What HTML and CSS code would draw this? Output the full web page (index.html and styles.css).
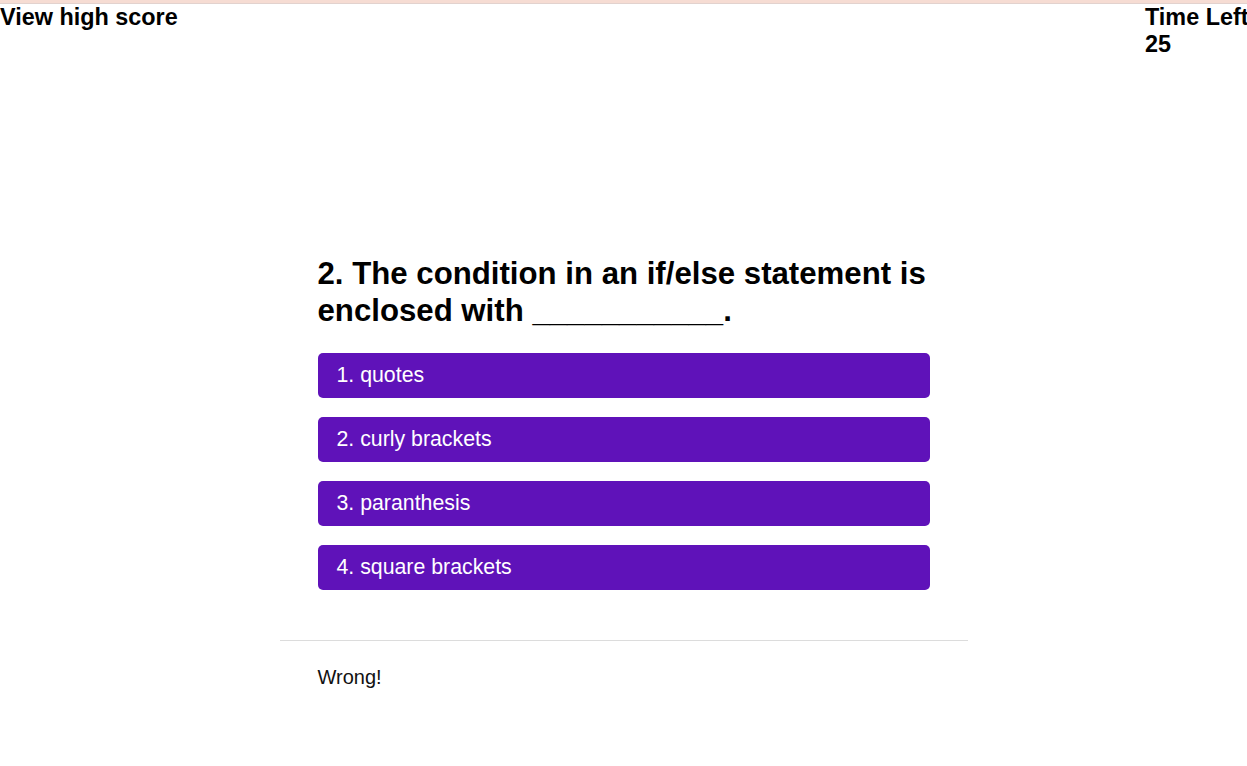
FILE: index.html
```html
<!DOCTYPE html>
<html lang="en">
<head>
<meta charset="utf-8">
<title>Code Quiz</title>
<link rel="stylesheet" href="styles.css">
</head>
<body>
<div class="topstrip"></div>
<header class="header">
  <a class="highscore">View high score</a>
  <div class="timer">
    <div>Time Left</div>
    <div>25</div>
  </div>
</header>
<main class="quiz">
  <section class="question-box">
    <h2 class="question">2. The condition in an if/else statement is enclosed with ___________.</h2>
    <div class="choices">
      <button class="choice">1. quotes</button>
      <button class="choice">2. curly brackets</button>
      <button class="choice">3. paranthesis</button>
      <button class="choice">4. square brackets</button>
    </div>
  </section>
  <hr class="divider">
  <p class="feedback">Wrong!</p>
</main>
</body>
</html>
```
FILE: styles.css
```css
html, body {
  margin: 0;
  padding: 0;
  background: #ffffff;
  font-family: "Liberation Sans", Arial, sans-serif;
  color: #000;
}

.topstrip {
  height: 3px;
  background: #f6dcd3;
  border-bottom: 1px solid #e2d2ce;
}

.header {
  display: flex;
  justify-content: space-between;
  align-items: flex-start;
  font-size: 23.4px;
  font-weight: bold;
  line-height: 26.5px;
}

.highscore {
  color: #000;
  text-decoration: none;
}

.timer {
  width: 102px;
  white-space: nowrap;
}

.quiz {
  width: 688px;
  margin: 199px auto 0;
}

.question-box {
  padding: 0 38px;
}

.question {
  margin: 0 0 24px;
  font-size: 31.2px;
  line-height: 36.5px;
  font-weight: bold;
}

.choices {
  display: flex;
  flex-direction: column;
  gap: 19px;
}

.choice {
  display: block;
  width: 100%;
  text-align: left;
  border: none;
  border-radius: 5px;
  background: #5f12b9;
  color: #ffffff;
  font-family: "Liberation Sans", Arial, sans-serif;
  font-size: 21.3px;
  line-height: 25px;
  padding: 10px 19px;
  cursor: pointer;
}

.divider {
  margin: 50px 0 0;
  border: none;
  border-top: 1px solid #dcdcdc;
  height: 0;
}

.feedback {
  margin: 25px 0 0;
  padding: 0 38px;
  font-size: 20px;
  line-height: 23px;
  color: #111;
}
```
